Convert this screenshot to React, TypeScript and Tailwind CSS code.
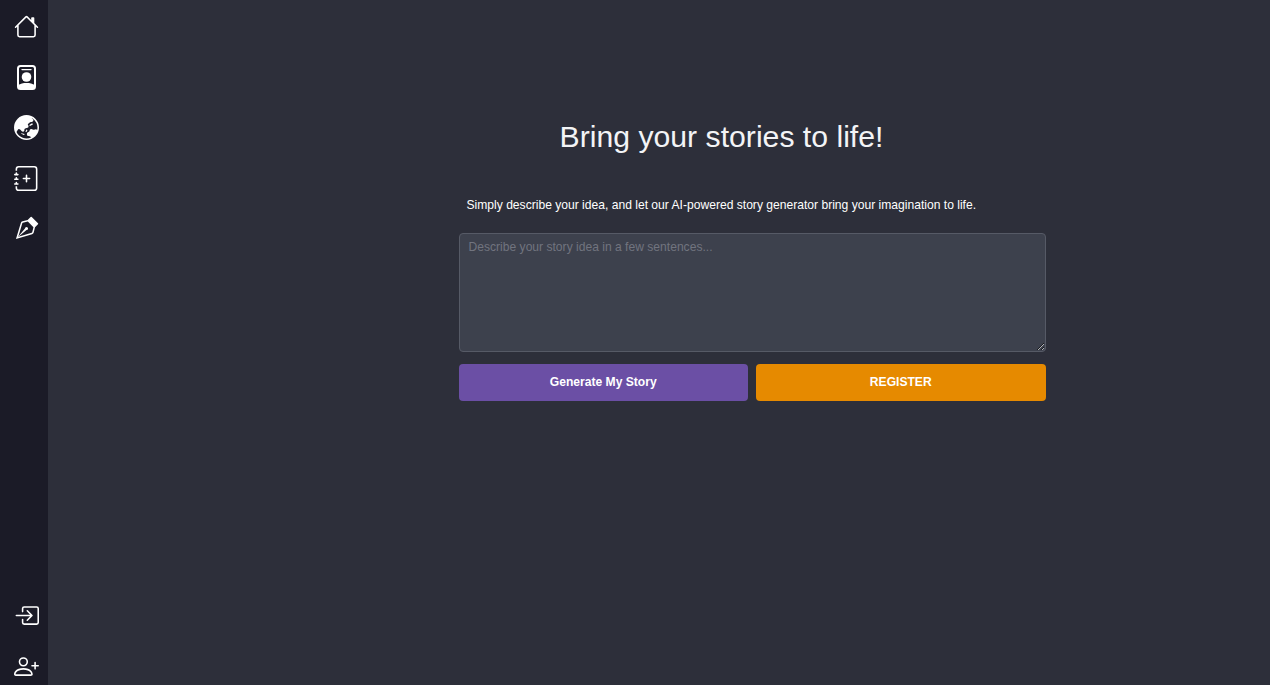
import { BsHouse, BsGlobeAsiaAustralia, BsJournalPlus, BsVectorPen, BsBoxArrowInRight, BsPersonPlus } from "react-icons/bs";

const iconClass = "w-[25px] h-[25px] text-white";

function Portrait() {
  return (
    <svg viewBox="0 0 25 25" className={iconClass} fill="none">
      <rect x="4" y="1" width="17" height="23" rx="2.5" stroke="currentColor" strokeWidth="2" />
      <path d="M8 4.6h9" stroke="currentColor" strokeWidth="1.4" strokeLinecap="round" />
      <circle cx="12.5" cy="12" r="4.8" fill="currentColor" />
      <path d="M4 24v-4c2.5-1.5 5.2-2.1 8.5-2.1s6 .6 8.5 2.1v4z" fill="currentColor" />
    </svg>
  );
}

export default function App() {
  return (
    <div className="flex h-[685px] w-full overflow-hidden bg-[#2d2f3a] font-['Liberation_Sans',Arial,sans-serif] text-white">
      <nav className="flex h-full w-12 shrink-0 flex-col items-center justify-between bg-[#1b1b27] pl-[5px] pt-[14px] pb-[6.5px]">
        <div className="flex flex-col items-center gap-[25.5px]">
          <BsHouse className={iconClass} />
          <Portrait />
          <BsGlobeAsiaAustralia className={iconClass} />
          <BsJournalPlus className={iconClass} />
          <BsVectorPen className={iconClass} />
        </div>
        <div className="flex flex-col items-center gap-[25.5px]">
          <BsBoxArrowInRight className={iconClass} />
          <BsPersonPlus className={iconClass} />
        </div>
      </nav>
      <main className="flex-1 pl-[410.5px]">
        <div className="flex w-[587px] flex-col pt-[119px]">
          <h1 className="pr-[61px] text-center text-[30.2px] leading-[35px] font-normal text-[#f3f4f6]">Bring your stories to life!</h1>
          <p className="mt-[44px] pl-2 text-[12.1px] leading-[14px] text-white">Simply describe your idea, and let our AI-powered story generator bring your imagination to life.</p>
          <textarea
            placeholder="Describe your story idea in a few sentences..."
            className="mt-[21px] h-[119px] w-full rounded border border-[#565a66] bg-[#3d414d] px-[9px] py-[6px] text-[12.1px] leading-[14px] text-white outline-none placeholder:text-[#71747f]"
          />
          <div className="mt-3 flex gap-2">
            <button className="h-[37px] flex-1 rounded bg-[#6b4fa5] text-[12.1px] font-bold text-white">Generate My Story</button>
            <button className="h-[37px] flex-1 rounded bg-[#e68a00] text-[12.1px] font-bold text-white">REGISTER</button>
          </div>
        </div>
      </main>
    </div>
  );
}
